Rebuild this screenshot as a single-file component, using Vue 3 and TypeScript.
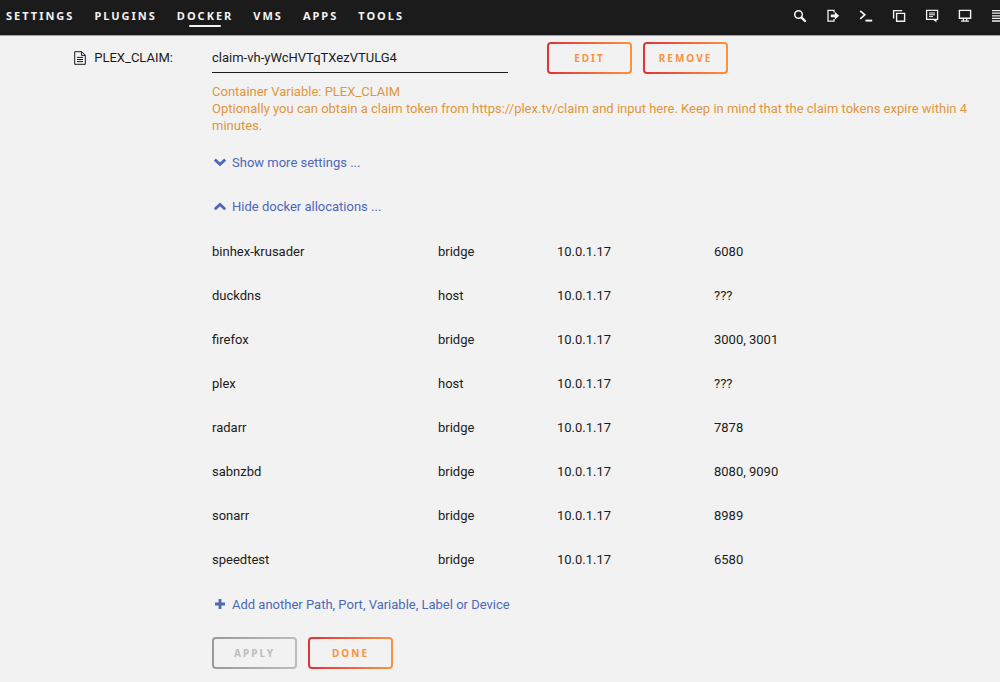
<script setup lang="ts">
import { ref } from 'vue'

interface Allocation {
  name: string
  network: string
  ip: string
  ports: string
}

const tabs: string[] = ['Settings', 'Plugins', 'Docker', 'VMs', 'Apps', 'Tools']
const activeTab = ref('Docker')
const claim = ref('claim-vh-yWcHVTqTXezVTULG4')

const allocations: Allocation[] = [
  { name: 'binhex-krusader', network: 'bridge', ip: '10.0.1.17', ports: '6080' },
  { name: 'duckdns', network: 'host', ip: '10.0.1.17', ports: '???' },
  { name: 'firefox', network: 'bridge', ip: '10.0.1.17', ports: '3000, 3001' },
  { name: 'plex', network: 'host', ip: '10.0.1.17', ports: '???' },
  { name: 'radarr', network: 'bridge', ip: '10.0.1.17', ports: '7878' },
  { name: 'sabnzbd', network: 'bridge', ip: '10.0.1.17', ports: '8080, 9090' },
  { name: 'sonarr', network: 'bridge', ip: '10.0.1.17', ports: '8989' },
  { name: 'speedtest', network: 'bridge', ip: '10.0.1.17', ports: '6580' },
]
</script>

<template>
  <div class="page">
    <header class="bar">
      <nav class="tabs">
        <a
          v-for="tab in tabs"
          :key="tab"
          href="#"
          class="tab"
          :class="{ active: tab === activeTab }"
          @click.prevent="activeTab = tab"
        >{{ tab }}</a>
      </nav>
      <div class="tools">
        <button type="button" class="tool" aria-label="Search">
          <svg viewBox="0 0 14 14"><circle cx="5.5" cy="5.5" r="3.8" stroke-width="1.5" /><path d="M8.6 8.6l3.4 3.4" stroke-width="2.4" stroke-linecap="round" /></svg>
        </button>
        <button type="button" class="tool" aria-label="Log out">
          <svg viewBox="0 0 14 14"><path d="M8 3.6V1.4H2v10.8h6V10" stroke-width="1.3" /><path d="M4.8 5.4h4V2.8L13.2 6.8 8.8 10.8V8.2h-4z" class="solid" /></svg>
        </button>
        <button type="button" class="tool" aria-label="Terminal">
          <svg viewBox="0 0 14 14"><path d="M1.2 1.8l4.6 4-4.6 4" stroke-width="1.7" /><path d="M6.4 11.6h6.8" stroke-width="2" /></svg>
        </button>
        <button type="button" class="tool" aria-label="Copy">
          <svg viewBox="0 0 14 14"><path d="M1.6 9.6V1.6h8.6" stroke-width="1.4" /><path d="M4.6 4.4h8v7.8h-8z" stroke-width="1.4" /></svg>
        </button>
        <button type="button" class="tool" aria-label="Feedback">
          <svg viewBox="0 0 14 14"><path d="M1.6 1.4h11v9h-11z" stroke-width="1.3" /><path d="M4 4h6M4 5.8h6M4 7.6h4" stroke-width="1" /><path d="M7.5 10.4h4v2.8z" class="solid" /></svg>
        </button>
        <button type="button" class="tool" aria-label="Info">
          <svg viewBox="0 0 14 14"><path d="M1.4 1.4h11.2v7.8H1.4z" stroke-width="1.4" /><path d="M5.4 9.4v2.6M8.6 9.4v2.6M3 12.2h8" stroke-width="1.3" /></svg>
        </button>
        <button type="button" class="tool" aria-label="Log">
          <svg viewBox="0 0 14 14"><path d="M1 1.6h12M1 4.2h9M1 6.8h12M1 9.4h9M1 12h12" stroke-width="1.3" /></svg>
        </button>
      </div>
    </header>

    <main class="form">
      <label class="name" for="claim">
        <svg class="doc" viewBox="0 0 12 14"><path d="M.7.7h7.1l3.5 3.5v9.1H.7z" /><path d="M7.6.8v3.6h3.6M3 6.4h6M3 8.5h6M3 10.6h6" /></svg>
        PLEX_CLAIM:
      </label>
      <div class="body">
        <div class="field">
          <input id="claim" v-model="claim" type="text" class="value">
          <div class="buttons">
            <button type="button" class="btn">Edit</button>
            <button type="button" class="btn">Remove</button>
          </div>
        </div>
        <p class="help">
          Container Variable: PLEX_CLAIM<br>
          Optionally you can obtain a claim token from https://plex.tv/claim and input here. Keep in mind that the claim tokens expire within 4 minutes.
        </p>
        <a href="#" class="link" @click.prevent>
          <svg viewBox="0 0 14 14"><path d="M1.8 4.6L7 9.4l5.2-4.8" /></svg>Show more settings ...
        </a>
        <a href="#" class="link" @click.prevent>
          <svg viewBox="0 0 14 14"><path d="M1.8 10.2L7 5.4l5.2 4.8" /></svg>Hide docker allocations ...
        </a>
        <table class="allocations">
          <colgroup><col class="c-name"><col class="c-net"><col class="c-ip"><col></colgroup>
          <tbody>
            <tr v-for="row in allocations" :key="row.name">
              <td>{{ row.name }}</td>
              <td>{{ row.network }}</td>
              <td>{{ row.ip }}</td>
              <td>{{ row.ports }}</td>
            </tr>
          </tbody>
        </table>
        <a href="#" class="link" @click.prevent>
          <svg viewBox="0 0 14 14"><path d="M7 2v10M2 7h10" /></svg>Add another Path, Port, Variable, Label or Device
        </a>
        <div class="buttons end">
          <button type="button" class="btn" disabled>Apply</button>
          <button type="button" class="btn">Done</button>
        </div>
      </div>
    </main>
  </div>
</template>

<style>
body {
  background: #f2f2f2;
}
</style>

<style scoped>
.page {
  overflow: hidden;
  color: #1c1b1b;
  font-family: Roboto, "Noto Sans", sans-serif;
  font-size: 13px;
  line-height: 17px;
}

.bar {
  display: flex;
  justify-content: space-between;
  height: 36px;
  background: #1c1b1b;
  border-bottom: 1px solid #a0a0a0;
  box-sizing: border-box;
}

.tabs {
  display: flex;
  gap: 20px;
  padding-left: 6px;
}

.tab {
  position: relative;
  color: #f2f2f2;
  font-family: "Noto Sans", sans-serif;
  font-size: 11px;
  font-weight: 700;
  letter-spacing: 2px;
  line-height: 32px;
  text-decoration: none;
  text-transform: uppercase;
}

.tab.active::after {
  content: "";
  position: absolute;
  left: 22%;
  right: 22%;
  top: 25px;
  height: 2px;
  border-radius: 1px;
  background: #f2f2f2;
}

.tools {
  display: flex;
  gap: 19px;
  align-items: flex-start;
  padding-top: 9px;
  margin-right: -5px;
}

.tool {
  display: block;
  padding: 0;
  border: 0;
  background: none;
  line-height: 0;
}

.tool svg {
  width: 14px;
  height: 14px;
  fill: none;
  stroke: #f2f2f2;
}

.tool .solid {
  fill: #f2f2f2;
  stroke: none;
}

.form {
  display: grid;
  grid-template-columns: 173px 1fr;
  column-gap: 39px;
  padding: 6px 24px 12px 0;
}

.name {
  display: flex;
  justify-content: flex-end;
  align-items: center;
  gap: 8px;
  height: 31px;
}

.doc {
  width: 12px;
  height: 14px;
  fill: none;
  stroke: #1c1b1b;
}

.field {
  display: flex;
  gap: 39px;
}

.value {
  width: 296px;
  height: 31px;
  box-sizing: border-box;
  padding: 0;
  border: 0;
  border-bottom: 1px solid #1c1b1b;
  background: none;
  color: inherit;
  font: inherit;
  outline: none;
}

.buttons {
  display: flex;
  gap: 11px;
}

.btn {
  min-width: 85px;
  height: 32px;
  padding: 0 12px;
  border: 2px solid transparent;
  border-radius: 4px;
  background: linear-gradient(#f2f2f2, #f2f2f2) padding-box, linear-gradient(90deg, #e03237, #fa9340) border-box;
  color: #fa9340;
  font-family: "Noto Sans", sans-serif;
  font-size: 10px;
  font-weight: 700;
  letter-spacing: 2px;
  text-transform: uppercase;
}

.btn:disabled {
  background: linear-gradient(#f2f2f2, #f2f2f2) padding-box, linear-gradient(90deg, #999, #bcbcbc) border-box;
  color: #bcbcbc;
}

.help {
  margin: 9px 0 6px;
  color: #e0963e;
}

.link {
  display: flex;
  align-items: center;
  gap: 5px;
  height: 44px;
  color: #4d68b8;
  text-decoration: none;
}

.link svg {
  width: 14px;
  height: 14px;
  margin-left: 1px;
  fill: none;
  stroke: #4d68b8;
  stroke-width: 2.8;
}

.allocations {
  width: 100%;
  margin: 1px 0;
  border-collapse: collapse;
  table-layout: fixed;
}

.allocations td {
  height: 44px;
  padding: 0;
}

.c-name {
  width: 226px;
}

.c-net {
  width: 119px;
}

.c-ip {
  width: 157px;
}

.end {
  margin-top: 11px;
}
</style>
